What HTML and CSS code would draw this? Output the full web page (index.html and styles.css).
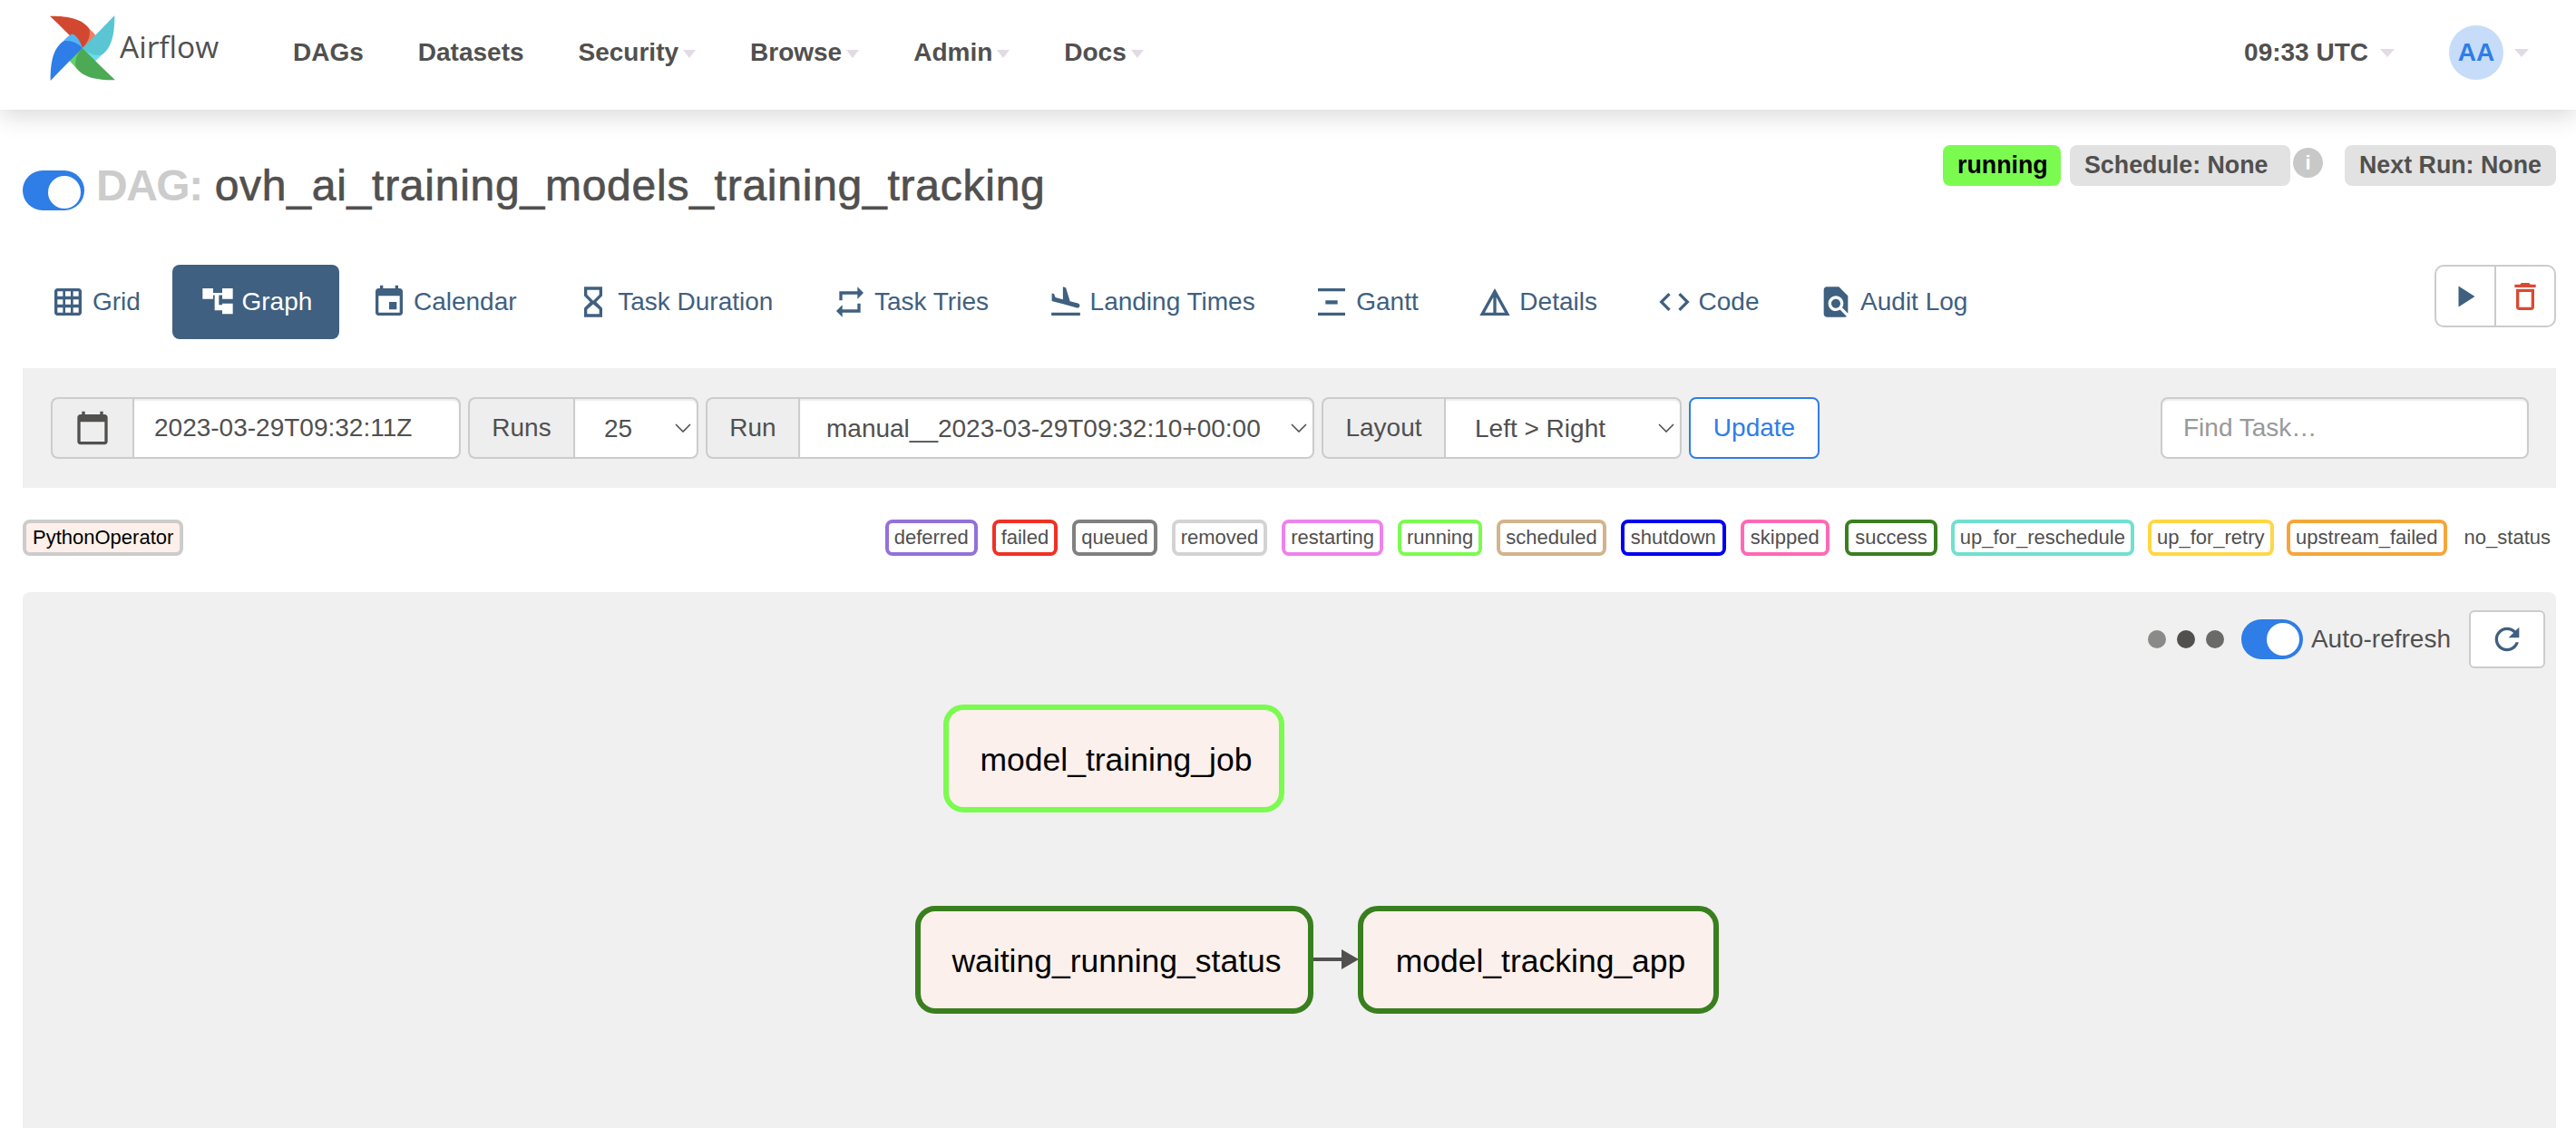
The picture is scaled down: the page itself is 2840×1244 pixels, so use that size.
FILE: index.html
```html
<!DOCTYPE html>
<html lang="en">

<head>
  <meta charset="UTF-8">
  <title>Airflow - ovh_ai_training_models_training_tracking</title>
  <link rel="stylesheet" href="styles.css">
</head>

<body>
  <!-- top navbar -->
  <nav class="navbar">
    <a class="brand" href="#">
      <svg class="brand-logo" viewBox="-105 -105 210 210">
        <g>
          <path fill="#f37e62" d="M22 -62C32 -52 42 -44 45 -33C42 -22 26 -8 0 0C8 -20 16 -40 22 -62Z"/>
          <path fill="#d2472f" d="M-105 -103C-60 -103 -5 -100 22 -62C26 -40 18 -18 0 0C-35 -35 -70 -70 -105 -103Z"/>
        </g>
        <g transform="rotate(90)">
          <path fill="#66e0ee" d="M22 -62C32 -52 42 -44 45 -33C42 -22 26 -8 0 0C8 -20 16 -40 22 -62Z"/>
          <path fill="#5ac6d4" d="M-105 -103C-60 -103 -5 -100 22 -62C26 -40 18 -18 0 0C-35 -35 -70 -70 -105 -103Z"/>
        </g>
        <g transform="rotate(180)">
          <path fill="#66d06a" d="M22 -62C32 -52 42 -44 45 -33C42 -22 26 -8 0 0C8 -20 16 -40 22 -62Z"/>
          <path fill="#4caa55" d="M-105 -103C-60 -103 -5 -100 22 -62C26 -40 18 -18 0 0C-35 -35 -70 -70 -105 -103Z"/>
        </g>
        <g transform="rotate(270)">
          <path fill="#55b4f6" d="M22 -62C32 -52 42 -44 45 -33C42 -22 26 -8 0 0C8 -20 16 -40 22 -62Z"/>
          <path fill="#2f7de6" d="M-105 -103C-60 -103 -5 -100 22 -62C26 -40 18 -18 0 0C-35 -35 -70 -70 -105 -103Z"/>
        </g>
      </svg>
      <span class="brand-name">Airflow</span>
    </a>
    <ul class="nav-links">
      <li><a href="#">DAGs</a></li>
      <li><a href="#">Datasets</a></li>
      <li><a href="#">Security<span class="caret"></span></a></li>
      <li><a href="#">Browse<span class="caret"></span></a></li>
      <li><a href="#">Admin<span class="caret"></span></a></li>
      <li><a href="#">Docs<span class="caret"></span></a></li>
    </ul>
    <div class="nav-right">
      <span class="clock">09:33 UTC</span>
      <span class="caret caret-clock"></span>
      <span class="avatar">AA</span>
      <span class="caret caret-user"></span>
    </div>
  </nav>

  <main class="page">
    <!-- dag title and badges -->
    <div class="dag-header">
      <h3 class="dag-title">
        <span class="switch"><span class="switch-knob"></span></span>
        <span class="dag-prefix">DAG:</span>
        <span class="dag-name">ovh_ai_training_models_training_tracking</span>
      </h3>
      <div class="badges">
        <span class="badge badge-running">running</span>
        <span class="badge badge-schedule">Schedule: None</span>
        <span class="info-icon">i</span>
        <span class="badge badge-next">Next Run: None</span>
      </div>
    </div>

    <!-- view tabs -->
    <div class="tabs-row">
      <ul class="tabs">
        <li><a href="#">
          <svg class="icon" viewBox="0 0 24 24"><path fill-rule="evenodd" d="M5 3h14c1.100 0 2 .9 2 2v14c0 1.100-.9 2-2 2H5c-1.100 0-2-.9-2-2V5c0-1.100.9-2 2-2zm0 2v3.200h3.600V5H5zm5.200 0v3.200h3.600V5h-3.600zm5.200 0v3.200H19V5h-3.600zM5 10.400v3.200h3.600v-3.200H5zm5.200 0v3.200h3.600v-3.200h-3.600zm5.200 0v3.200H19v-3.200h-3.600zM5 15.800V19h3.600v-3.200H5zm5.200 0V19h3.600v-3.200h-3.600zm5.200 0V19H19v-3.200h-3.600z"/></svg>
          Grid</a></li>
        <li class="active"><a href="#">
          <svg class="icon" viewBox="0 0 24 24"><path d="M2 3h7v3h6V3h7v7h-7V7.500h-2.200V14H15v-1h7v7h-7v-2.500h-5V7.500H9V10H2V3z"/></svg>
          Graph</a></li>
        <li><a href="#">
          <svg class="icon" viewBox="0 0 24 24"><path d="M17 12h-5v5h5v-5zM16 1v2H8V1H6v2H5c-1.110 0-1.990.9-1.990 2L3 19c0 1.100.89 2 2 2h14c1.100 0 2-.9 2-2V5c0-1.100-.9-2-2-2h-1V1h-2zm3 18H5V8h14v11z"/></svg>
          Calendar</a></li>
        <li><a href="#">
          <svg class="icon" viewBox="0 0 24 24"><path d="M6 2h12v6l-4 4 4 4v6H6v-6l4-4-4-4V2zm2 2v3.200l4 4 4-4V4H8zm4 9.500l-4 3.500v3h8v-3l-4-3.500z"/></svg>
          Task Duration</a></li>
        <li><a href="#">
          <svg class="icon" viewBox="0 0 24 24"><path d="M7 7h10v3l4-4-4-4v3H5v6h2V7zm10 10H7v-3l-4 4 4 4v-3h12v-6h-2v4z"/></svg>
          Task Tries</a></li>
        <li><a href="#">
          <svg class="icon" viewBox="0 0 24 24"><path d="M2.500 19h19v2h-19zm7.180-5.730l4.350 1.160 5.310 1.420c.8.21 1.620-.26 1.840-1.060.21-.8-.26-1.620-1.060-1.840l-5.310-1.420-2.760-9.020L10.120 2v8.280L5.150 8.950l-.93-2.320-1.450-.39v5.170l1.600.43 5.310 1.430z"/></svg>
          Landing Times</a></li>
        <li><a href="#">
          <svg class="icon" viewBox="0 0 24 24"><path d="M3 3h18v2H3zM8 11h8v2.500H8zM3 19h18v2H3z"/></svg>
          Gantt</a></li>
        <li><a href="#">
          <svg class="icon" viewBox="0 0 24 24"><path d="M12 3L2 21h20L12 3zm1 5.920L18.600 19H13V8.920zm-2 0V19H5.400L11 8.920z"/></svg>
          Details</a></li>
        <li><a href="#">
          <svg class="icon" viewBox="0 0 24 24"><path d="M9.400 16.600L4.800 12l4.600-4.600L8 6l-6 6 6 6 1.400-1.400zm5.200 0l4.600-4.600-4.600-4.600L16 6l6 6-6 6-1.400-1.400z"/></svg>
          Code</a></li>
        <li><a href="#">
          <svg class="icon" viewBox="0 0 24 24"><path d="M20 19.590V8l-6-6H6c-1.100 0-1.990.9-1.990 2L4 20c0 1.100.89 2 1.990 2H18c.45 0 .85-.15 1.190-.4l-4.430-4.430c-.8.52-1.740.83-2.760.83-2.760 0-5-2.240-5-5s2.240-5 5-5 5 2.240 5 5c0 1.020-.31 1.960-.83 2.750L20 19.590zM9 13c0 1.660 1.340 3 3 3s3-1.340 3-3-1.340-3-3-3-3 1.340-3 3z"/></svg>
          Audit Log</a></li>
      </ul>
      <div class="actions">
        <button class="action-btn">
          <svg class="action-icon" viewBox="0 0 24 24"><path fill="#3f6080" d="M7 4.300l12 7.700-12 7.700V4.300z"/></svg>
        </button>
        <button class="action-btn">
          <svg class="action-icon icon-trash" viewBox="0 0 24 24"><path fill="#d94a33" d="M6 19c0 1.100.9 2 2 2h8c1.100 0 2-.9 2-2V7H6v12zM8 9h8v10H8V9zm7.500-5l-1-1h-5l-1 1H5v2h14V4h-3.500z"/></svg>
        </button>
      </div>
    </div>

    <!-- filters -->
    <form class="filter-bar">
      <div class="group">
        <span class="addon addon-date">
          <svg class="date-icon" viewBox="0 0 24 24"><path d="M20 3h-1V1h-2v2H7V1H5v2H4c-1.100 0-2 .9-2 2v16c0 1.100.9 2 2 2h16c1.100 0 2-.9 2-2V5c0-1.100-.9-2-2-2zm0 18H4V8h16v13z"/></svg>
        </span>
        <input class="control control-date" type="text" value="2023-03-29T09:32:11Z">
      </div>
      <div class="group">
        <span class="addon addon-runs">Runs</span>
        <div class="select-wrap wrap-runs">
          <select class="control"><option>25</option></select>
          <svg class="chevron" viewBox="0 0 18 10"><path d="M1 1l8 8 8-8"/></svg>
        </div>
      </div>
      <div class="group">
        <span class="addon addon-run">Run</span>
        <div class="select-wrap wrap-run">
          <select class="control"><option>manual__2023-03-29T09:32:10+00:00</option></select>
          <svg class="chevron" viewBox="0 0 18 10"><path d="M1 1l8 8 8-8"/></svg>
        </div>
      </div>
      <div class="group">
        <span class="addon addon-layout">Layout</span>
        <div class="select-wrap wrap-layout">
          <select class="control"><option>Left &gt; Right</option></select>
          <svg class="chevron" viewBox="0 0 18 10"><path d="M1 1l8 8 8-8"/></svg>
        </div>
      </div>
      <button class="update-btn" type="button">Update</button>
      <input class="control find-task" type="text" placeholder="Find Task…">
    </form>

    <!-- legend -->
    <div class="legend">
      <span class="legend-item operator">PythonOperator</span>
      <div class="states">
        <span class="legend-item st-deferred">deferred</span>
        <span class="legend-item st-failed">failed</span>
        <span class="legend-item st-queued">queued</span>
        <span class="legend-item st-removed">removed</span>
        <span class="legend-item st-restarting">restarting</span>
        <span class="legend-item st-running">running</span>
        <span class="legend-item st-scheduled">scheduled</span>
        <span class="legend-item st-shutdown">shutdown</span>
        <span class="legend-item st-skipped">skipped</span>
        <span class="legend-item st-success">success</span>
        <span class="legend-item st-reschedule">up_for_reschedule</span>
        <span class="legend-item st-retry">up_for_retry</span>
        <span class="legend-item st-upstream">upstream_failed</span>
        <span class="legend-item st-none">no_status</span>
      </div>
    </div>

    <!-- graph -->
    <div class="graph-panel">
      <div class="graph-tools">
        <span class="dot dot-1"></span>
        <span class="dot dot-2"></span>
        <span class="dot dot-3"></span>
        <span class="switch switch-refresh"><span class="switch-knob"></span></span>
        <span class="refresh-label">Auto-refresh</span>
        <button class="refresh-btn">
          <svg class="refresh-icon" viewBox="0 0 24 24"><path d="M17.650 6.350C16.200 4.900 14.210 4 12 4c-4.420 0-7.990 3.580-7.990 8s3.570 8 7.990 8c3.730 0 6.840-2.550 7.730-6h-2.080c-.82 2.330-3.040 4-5.650 4-3.310 0-6-2.690-6-6s2.690-6 6-6c1.660 0 3.140.69 4.220 1.780L13 11h7V4l-2.350 2.350z"/></svg>
        </button>
      </div>
      <div class="node node-job">model_training_job</div>
      <div class="node node-wait">waiting_running_status</div>
      <div class="node node-app">model_tracking_app</div>
      <svg class="edge" viewBox="0 0 50 22"><path d="M0 11h32" stroke="#51504f" stroke-width="4"/><path d="M31 0l19 11-19 11z" fill="#51504f"/></svg>
    </div>
  </main>
</body>

</html>
```
FILE: styles.css
```css
html, body {
  margin: 0;
  padding: 0;
  height: 100%;
  overflow: hidden;
}

body {
  font-family: "Liberation Sans", Arial, sans-serif;
  font-size: 28px;
  color: #51504f;
  background-color: #ffffff;
}

a {
  color: inherit;
  text-decoration: none;
}

ul {
  list-style: none;
  margin: 0;
  padding: 0;
}

/* navbar */
.navbar {
  display: flex;
  align-items: center;
  height: 121px;
  box-sizing: border-box;
  padding: 0 52px 5px 55px;
  background-color: #ffffff;
  box-shadow: 0 6px 26px rgba(0, 0, 0, 0.16);
  position: relative;
}

.brand {
  display: flex;
  align-items: flex-end;
  width: 238px;
  margin-top: -10px;
}

.brand-logo {
  width: 72px;
  height: 72px;
}

.brand-name {
  font-family: "Open Sans", sans-serif;
  font-size: 33.5px;
  line-height: 34px;
  margin-left: 5px;
  margin-bottom: 21px;
}

.nav-links {
  display: flex;
}

.nav-links a {
  display: block;
  padding: 0 30px;
  font-weight: bold;
}

.caret {
  display: inline-block;
  width: 0;
  height: 0;
  margin-left: 5px;
  vertical-align: middle;
  border-top: 9px solid #e2dbe6;
  border-left: 7px solid transparent;
  border-right: 7px solid transparent;
}

.nav-right {
  display: flex;
  align-items: center;
  margin-left: auto;
}

.clock {
  font-weight: bold;
}

.caret-clock {
  margin-left: 13px;
  border-left-width: 8px;
  border-right-width: 8px;
}

.caret-user {
  margin-left: 12px;
  border-left-width: 8px;
  border-right-width: 8px;
}

.avatar {
  width: 60px;
  height: 60px;
  margin-left: 60px;
  border-radius: 50%;
  background-color: #c6dcf8;
  color: #2f7de6;
  font-weight: bold;
  line-height: 60px;
  text-align: center;
}

/* page */
.page {
  padding: 0 22px 0 25px;
}

.dag-header {
  display: flex;
  justify-content: space-between;
  align-items: flex-start;
  height: 171px;
  padding-top: 39px;
  box-sizing: border-box;
}

.dag-title {
  display: flex;
  align-items: center;
  margin: 28px 0 0;
  font-size: 48px;
  font-weight: normal;
  line-height: 44px;
  white-space: nowrap;
}

.dag-prefix,
.dag-name {
  position: relative;
  top: -5px;
}

.switch {
  display: inline-block;
  box-sizing: border-box;
  width: 68px;
  height: 44px;
  padding: 4px;
  border-radius: 22px;
  background-color: #2f7de6;
  text-align: right;
}

.switch-knob {
  display: inline-block;
  width: 36px;
  height: 36px;
  border-radius: 50%;
  background-color: #ffffff;
}

.dag-prefix {
  margin-left: 13px;
  color: #cccccc;
  font-weight: bold;
  letter-spacing: -1.5px;
}

.dag-name {
  margin-left: 14px;
  letter-spacing: 0.75px;
  -webkit-text-stroke: 0.7px #51504f;
}

.badges {
  display: flex;
  align-items: flex-start;
  white-space: nowrap;
}

.badge {
  display: inline-block;
  box-sizing: border-box;
  height: 45px;
  padding: 0 16px;
  border-radius: 8px;
  background-color: #e2e2e2;
  font-size: 26.8px;
  font-weight: bold;
  line-height: 45px;
}

.badge-running {
  width: 130px;
  background-color: #7bfb50;
  color: #000000;
}

.badge-schedule {
  width: 243px;
  margin-left: 10px;
}

.badge-next {
  width: 233px;
  margin-left: 24px;
}

.info-icon {
  width: 33px;
  height: 33px;
  margin: 3px 0 0 3px;
  border-radius: 50%;
  background-color: #c8c8c8;
  color: #ffffff;
  font-size: 22px;
  font-weight: bold;
  line-height: 33px;
  text-align: center;
}

/* tabs */
.tabs-row {
  display: flex;
  justify-content: space-between;
  align-items: flex-start;
  height: 82px;
  margin-bottom: 32px;
}

.tabs {
  display: flex;
  gap: 4.6px;
}

.tabs a {
  display: flex;
  align-items: center;
  gap: 7px;
  height: 82px;
  padding: 0 30px;
  border-radius: 8px;
  color: #3f6080;
}

.tabs .active a {
  background-color: #3f6080;
  color: #ffffff;
}

.icon {
  width: 40px;
  height: 40px;
  fill: currentColor;
}

.actions {
  display: flex;
  box-sizing: border-box;
  width: 134px;
  height: 69px;
  border: 2px solid #cccccc;
  border-radius: 10px;
}

.action-btn {
  width: 64px;
  padding: 0;
  border: none;
  background: none;
}

.action-btn + .action-btn {
  width: 66px;
  border-left: 2px solid #cccccc;
}

.action-icon {
  width: 36px;
  height: 36px;
  vertical-align: middle;
}

.icon-trash {
  width: 40px;
  height: 40px;
}

/* filters */
.filter-bar {
  display: flex;
  align-items: center;
  gap: 8px;
  height: 132px;
  padding: 0 30px 0 31px;
  background-color: #f0f0f0;
}

.group {
  display: flex;
  height: 68px;
}

.addon {
  display: flex;
  align-items: center;
  justify-content: center;
  box-sizing: border-box;
  border: 2px solid #cccccc;
  border-right: none;
  border-radius: 8px 0 0 8px;
  background-color: #eeeeee;
}

.addon-date {
  width: 90px;
}

.addon-runs {
  width: 116px;
}

.addon-run {
  width: 102px;
}

.addon-layout {
  width: 135px;
}

.date-icon {
  width: 40px;
  height: 40px;
  fill: #51504f;
}

.control {
  display: block;
  box-sizing: border-box;
  width: 100%;
  height: 68px;
  padding: 0 32px;
  border: 2px solid #cccccc;
  border-radius: 0 8px 8px 0;
  background-color: #ffffff;
  box-shadow: inset 0 2px 2px rgba(0, 0, 0, 0.075);
  color: #51504f;
  font-family: inherit;
  font-size: 28px;
  appearance: none;
  outline: none;
}

.control-date {
  width: 362px;
  padding: 0 22px;
}

.select-wrap {
  position: relative;
}

.wrap-runs {
  width: 138px;
}

.wrap-run {
  width: 569px;
}

.wrap-run .control {
  padding-left: 29px;
}

.wrap-layout {
  width: 262px;
}

.chevron {
  position: absolute;
  top: 29px;
  right: 8px;
  width: 18px;
  height: 10px;
  fill: none;
  stroke: #51504f;
  stroke-width: 1.6;
  pointer-events: none;
}

.update-btn {
  box-sizing: border-box;
  width: 144px;
  height: 68px;
  padding: 0;
  border: 2px solid #2f7de6;
  border-radius: 8px;
  background-color: #ffffff;
  color: #2f7de6;
  font-family: inherit;
  font-size: 28px;
}

.find-task {
  width: 406px;
  margin-left: auto;
  padding: 0 23px;
  border-radius: 8px;
}

.find-task::placeholder {
  color: #999999;
}

/* legend */
.legend {
  display: flex;
  justify-content: space-between;
  align-items: center;
  height: 40px;
  margin: 35px 0 40px;
  font-size: 22px;
}

.states {
  display: flex;
  gap: 16px;
}

.legend-item {
  box-sizing: border-box;
  height: 40px;
  padding: 0 6px;
  border: 4px solid #cccccc;
  border-radius: 8px;
  line-height: 32px;
  background-color: #ffffff;
}

.operator {
  padding: 0 7px;
  background-color: #fdf0ea;
  color: #000000;
}

.st-deferred { border-color: #9370db; }
.st-failed { border-color: #f03024; }
.st-queued { border-color: #808080; }
.st-removed { border-color: #d3d3d3; }
.st-restarting { border-color: #ee82ee; }
.st-running { border-color: #7bfb50; }
.st-scheduled { border-color: #d2b48c; }
.st-shutdown { border-color: #0000f0; padding: 0 7px; }
.st-skipped { border-color: #ff69b4; padding: 0 7px; }
.st-success { border-color: #3a7f1f; padding: 0 7.5px; margin-left: 1px; }
.st-reschedule { border-color: #70e0d0; margin: 0 -1px 0 -1.5px; }
.st-retry { border-color: #ffd743; margin-right: -1.5px; }
.st-upstream { border-color: #f5a63a; }
.st-none { border-color: transparent; background-color: transparent; padding: 0 2px 0 0; margin-left: -1px; }

/* graph */
.graph-panel {
  position: relative;
  height: 800px;
  border-radius: 8px 8px 0 0;
  background-color: #f0f0f0;
}

.graph-tools {
  display: flex;
  align-items: center;
  justify-content: flex-end;
  padding: 20px 12px 0 0;
}

.dot {
  width: 20px;
  height: 20px;
  margin-right: 12px;
  border-radius: 50%;
}

.dot-1 {
  background-color: #8a8a88;
}

.dot-2 {
  background-color: #51504f;
}

.dot-3 {
  background-color: #6a6a68;
  margin-right: 19px;
}

.refresh-label {
  margin: 0 20px 0 9px;
}

.refresh-btn {
  box-sizing: border-box;
  width: 84px;
  height: 64px;
  padding: 0;
  border: 2px solid #cccccc;
  border-radius: 6px;
  background-color: #ffffff;
}

.refresh-icon {
  width: 40px;
  height: 40px;
  fill: #3f6080;
  vertical-align: middle;
}

.node {
  position: absolute;
  box-sizing: border-box;
  height: 119px;
  padding-left: 5px;
  border: 6px solid #3a7f1f;
  border-radius: 22px;
  background-color: #fbf0ec;
  color: #000000;
  font-size: 35.5px;
  line-height: 110px;
  text-align: center;
}

.node-job {
  left: 1015px;
  top: 124px;
  width: 376px;
  border-color: #7bfb50;
}

.node-wait {
  left: 984px;
  top: 346px;
  width: 439px;
}

.node-app {
  left: 1472px;
  top: 346px;
  width: 398px;
}

.edge {
  position: absolute;
  left: 1423px;
  top: 394px;
  width: 50px;
  height: 22px;
}
```
